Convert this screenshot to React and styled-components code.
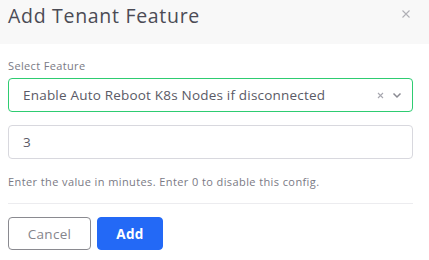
import React from "react";
import styled, { createGlobalStyle } from "styled-components";

const Global = createGlobalStyle`
  html, body { margin: 0; padding: 0; background: #fff; }
  body { font-family: "Open Sans", "Noto Sans", sans-serif; width: 429px; height: 260px; overflow: hidden; }
  * { box-sizing: border-box; }
`;

const Modal = styled.div`
  width: 429px;
  height: 260px;
  display: flex;
  flex-direction: column;
  background: #fff;
`;

const Header = styled.div`
  height: 44px;
  background: #f8f8f8;
  display: flex;
  align-items: flex-start;
  justify-content: space-between;
  padding: 4px 19px 0 8px;
`;

const Title = styled.h2`
  margin: 0;
  font-size: 19.5px;
  font-weight: 400;
  color: #4b4b55;
  letter-spacing: 0.7px;
  line-height: 24px;
`;

const Close = styled.button`
  border: none;
  background: none;
  padding: 0;
  margin-top: 6px;
  width: 8px;
  height: 8px;
  display: flex;
  cursor: pointer;
`;

const Body = styled.div`
  padding: 15px 16px 0 8px;
  display: flex;
  flex-direction: column;
`;

const Label = styled.label`
  font-size: 11px;
  color: #7a7a85;
  line-height: 14px;
  margin-bottom: 5px;
  letter-spacing: 0.35px;
`;

const Field = styled.div`
  height: 34px;
  border: 1px solid ${(p) => (p.$focused ? "#2ecc71" : "#d8d8de")};
  border-radius: 4px;
  display: flex;
  align-items: center;
  padding: 0 10px 0 14px;
  font-size: 13.5px;
  color: #5a5a66;
  margin-bottom: ${(p) => p.$mb || 0}px;
`;

const FieldText = styled.span`
  flex: 1;
  letter-spacing: 0.2px;
`;

const Icons = styled.span`
  display: flex;
  align-items: center;
  gap: 8px;
`;

const Help = styled.div`
  font-size: 11px;
  color: #7a7a85;
  margin-top: 15px;
  letter-spacing: 0.4px;
`;

const Divider = styled.hr`
  border: none;
  border-top: 1px solid #ececef;
  margin: 14px 0 13px;
`;

const Footer = styled.div`
  display: flex;
  gap: 6px;
`;

const Button = styled.button`
  height: 33px;
  border-radius: 4px;
  font-family: inherit;
  font-size: 13.5px;
  cursor: pointer;
  border: 1px solid ${(p) => (p.$primary ? "#2369f6" : "#8a8a90")};
  background: ${(p) => (p.$primary ? "#2369f6" : "#fff")};
  color: ${(p) => (p.$primary ? "#fff" : "#85858c")};
  font-weight: ${(p) => (p.$primary ? 700 : 400)};
  letter-spacing: 0.3px;
  width: ${(p) => p.$w}px;
`;

export default function App() {
  return (
    <>
      <Global />
      <Modal>
        <Header>
          <Title>Add Tenant Feature</Title>
          <Close aria-label="close">
            <svg width="8" height="8" viewBox="0 0 8 8">
              <path d="M0.5 0.5L7.5 7.5M7.5 0.5L0.5 7.5" stroke="#b0b0b6" strokeWidth="1.1" />
            </svg>
          </Close>
        </Header>
        <Body>
          <Label>Select Feature</Label>
          <Field $focused $mb={13}>
            <FieldText>Enable Auto Reboot K8s Nodes if disconnected</FieldText>
            <Icons>
              <svg width="7" height="7" viewBox="0 0 7 7">
                <path d="M1 1L6 6M6 1L1 6" stroke="#a8a8b0" strokeWidth="1.1" />
              </svg>
              <svg width="10" height="7" viewBox="0 0 10 7">
                <path d="M1.5 1.5L5 5L8.5 1.5" stroke="#8a8a92" strokeWidth="1.5" fill="none" />
              </svg>
            </Icons>
          </Field>
          <Field>
            <FieldText>3</FieldText>
          </Field>
          <Help>Enter the value in minutes. Enter 0 to disable this config.</Help>
          <Divider />
          <Footer>
            <Button $w={83}>Cancel</Button>
            <Button $primary $w={66}>Add</Button>
          </Footer>
        </Body>
      </Modal>
    </>
  );
}
